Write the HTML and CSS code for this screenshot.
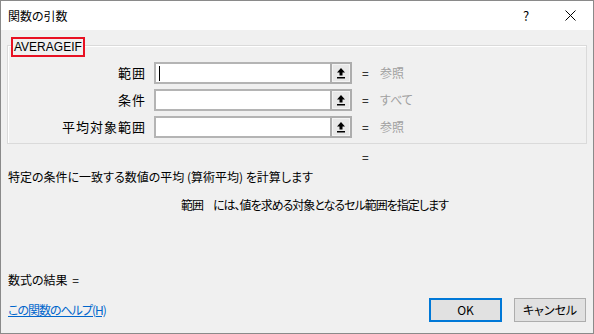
FILE: index.html
```html
<!DOCTYPE html>
<html lang="ja">
<head>
<meta charset="utf-8">
<title>関数の引数</title>
<link rel="stylesheet" href="styles.css">
</head>
<body>
<div class="window">
  <div class="titlebar">
    <span class="title">関数の引数</span>
    <span class="tb-btn help">?</span>
    <span class="tb-btn close">
      <svg width="11" height="11" viewBox="0 0 11 11"><path d="M0.5 0.5 L10.5 10.5 M10.5 0.5 L0.5 10.5" stroke="#000" stroke-width="1" fill="none"/></svg>
    </span>
  </div>
  <div class="content">
    <div class="group">
      <span class="legend">AVERAGEIF</span>
      <div class="row">
        <span class="label">範囲</span>
        <span class="input"><span class="caret"></span></span>
        <span class="pick"><svg width="10" height="12" viewBox="0 0 10 12"><path d="M5 1 L9 5.5 L6.5 5.5 L6.5 8.5 L3.5 8.5 L3.5 5.5 L1 5.5 Z" fill="#000"/><rect x="1" y="10" width="8" height="1.5" fill="#000"/></svg></span>
        <span class="eq">=</span>
        <span class="value">参照</span>
      </div>
      <div class="row">
        <span class="label">条件</span>
        <span class="input"></span>
        <span class="pick"><svg width="10" height="12" viewBox="0 0 10 12"><path d="M5 1 L9 5.5 L6.5 5.5 L6.5 8.5 L3.5 8.5 L3.5 5.5 L1 5.5 Z" fill="#000"/><rect x="1" y="10" width="8" height="1.5" fill="#000"/></svg></span>
        <span class="eq">=</span>
        <span class="value">すべて</span>
      </div>
      <div class="row">
        <span class="label">平均対象範囲</span>
        <span class="input"></span>
        <span class="pick"><svg width="10" height="12" viewBox="0 0 10 12"><path d="M5 1 L9 5.5 L6.5 5.5 L6.5 8.5 L3.5 8.5 L3.5 5.5 L1 5.5 Z" fill="#000"/><rect x="1" y="10" width="8" height="1.5" fill="#000"/></svg></span>
        <span class="eq">=</span>
        <span class="value">参照</span>
      </div>
    </div>
    <div class="result-eq">=</div>
    <div class="desc">特定の条件に一致する数値の平均 (算術平均) を計算します</div>
    <div class="detail"><span class="arg">範囲</span>には、値を求める対象となるセル範囲を指定します</div>
    <div class="formula">数式の結果 =</div>
    <div class="footer">
      <a class="help-link" href="#">この関数のヘルプ(H)</a>
      <span class="btn ok">OK</span>
      <span class="btn cancel">キャンセル</span>
    </div>
  </div>
</div>
</body>
</html>
```
FILE: styles.css
```css
html, body {
  margin: 0;
  padding: 0;
}
body {
  width: 594px;
  height: 334px;
  font-family: "Noto Sans CJK JP", "Noto Sans", sans-serif;
  font-size: 12px;
  line-height: 16px;
  font-feature-settings: "palt";
  color: #000;
}
.window {
  box-sizing: border-box;
  width: 594px;
  height: 334px;
  border: 1px solid #8a8a8a;
  background: #f0f0f0;
  display: flex;
  flex-direction: column;
}
.titlebar {
  height: 29px;
  background: #fff;
  display: flex;
  align-items: center;
  padding-left: 7px;
}
.title {
  flex: 1;
  font-size: 12px;
}
.tb-btn {
  height: 29px;
  display: flex;
  align-items: center;
  justify-content: center;
}
.help {
  width: 44px;
  font-size: 13px;
}
.close {
  width: 45px;
}
.content {
  padding: 0 6px;
  display: flex;
  flex-direction: column;
}
.group {
  position: relative;
  margin-top: 15px;
  border: 1px solid #dadada;
  box-shadow: inset 1px 1px 0 #fff;
  padding: 16px 0 5px 0;
  display: flex;
  flex-direction: column;
  gap: 5px;
}
.legend {
  position: absolute;
  top: -9px;
  left: 3px;
  height: 16px;
  padding: 0 1px;
  border: 2px solid #e81123;
  background: #f0f0f0;
  line-height: 16px;
  font-family: "Liberation Sans", Arial, sans-serif;
  font-size: 12px;
  font-feature-settings: normal;
}
.row {
  display: flex;
  align-items: center;
  height: 22px;
}
.label {
  width: 138px;
  text-align: right;
  margin-right: 8px;
  font-size: 13px;
  letter-spacing: 1px;
}
.input {
  box-sizing: border-box;
  width: 176px;
  height: 22px;
  background: #fff;
  border: 2px solid #b4b4b4;
  border-right: none;
  display: flex;
  align-items: center;
  padding-left: 3px;
}
.caret {
  width: 1px;
  height: 15px;
  background: #000;
}
.pick {
  box-sizing: border-box;
  width: 22px;
  height: 22px;
  border: 2px solid #adadad;
  background: #e8e8e8;
  box-shadow: inset 0 0 0 1px #f4f4f4;
  display: flex;
  align-items: center;
  justify-content: center;
}
.eq {
  margin-left: 10px;
  width: 8px;
}
.value {
  margin-left: 10px;
  color: #a0a0a0;
}
.result-eq {
  margin-top: 5px;
  margin-left: 355px;
}
.desc {
  margin-top: 4px;
  margin-left: 1px;
}
.detail {
  margin-top: 12px;
  margin-left: 174px;
  letter-spacing: -1px;
}
.arg {
  margin-right: 10px;
}
.formula {
  margin-top: 59px;
  margin-left: 1px;
  word-spacing: 2px;
}
.footer {
  margin-top: 10px;
  display: flex;
  align-items: center;
  gap: 12px;
  padding-left: 1px;
  padding-right: 1px;
}
.help-link {
  flex: 1;
  color: #0066cc;
  text-decoration: underline;
  letter-spacing: -1px;
}
.btn {
  box-sizing: border-box;
  height: 24px;
  display: flex;
  align-items: center;
  justify-content: center;
  background: #e1e1e1;
}
.ok {
  width: 73px;
  border: 2px solid #0078d7;
}
.cancel {
  width: 72px;
  border: 1px solid #adadad;
}
```
